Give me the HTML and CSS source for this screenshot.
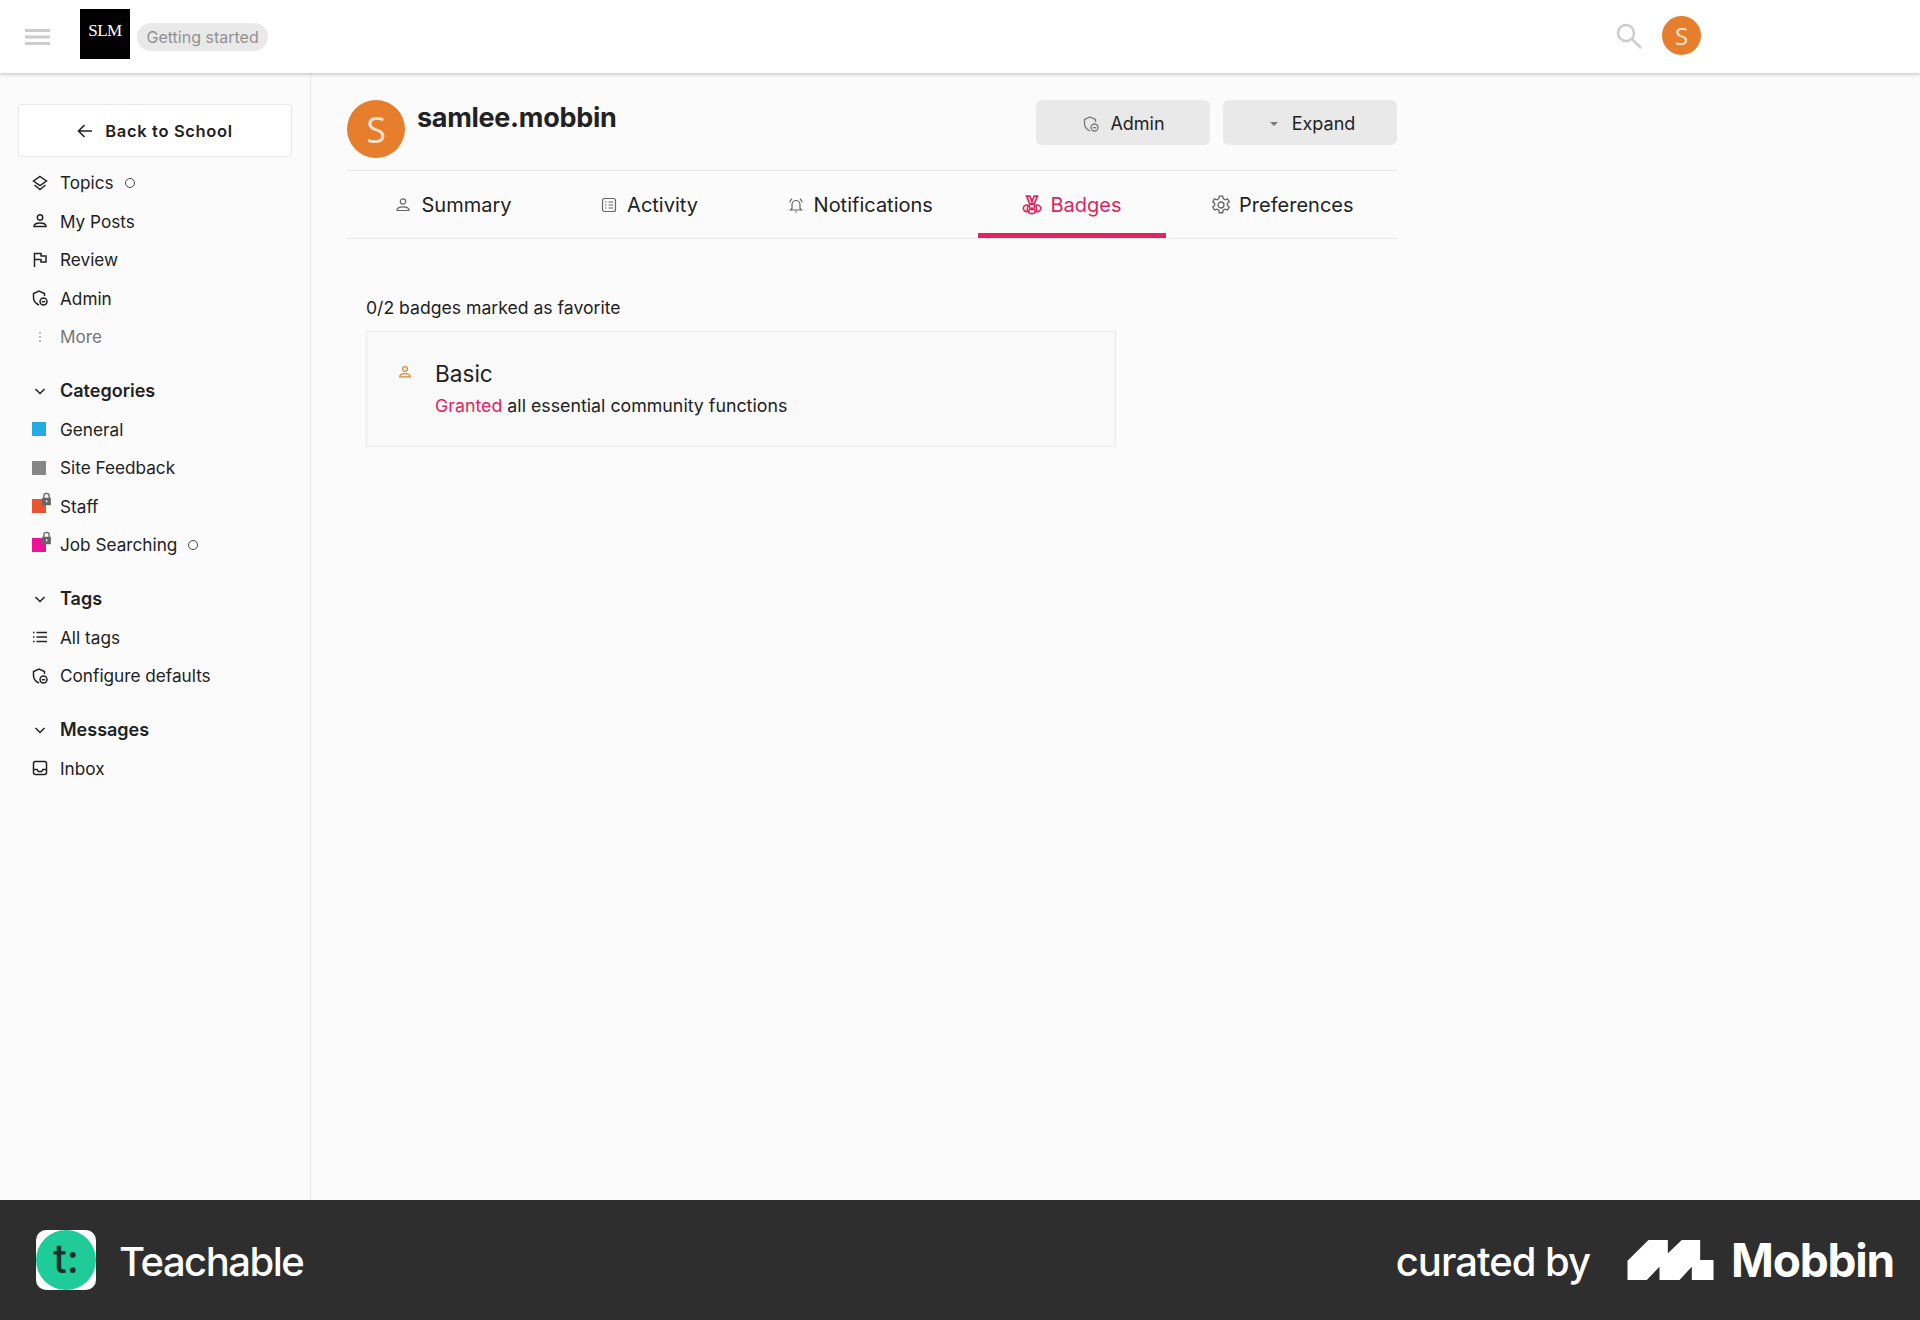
FILE: index.html
```html
<!DOCTYPE html>
<html lang="en">

<head>
    <meta charset="UTF-8">
    <title>samlee.mobbin - Badges</title>
    <link rel="stylesheet" href="styles.css">
</head>

<body>
    <svg class="sprite" xmlns="http://www.w3.org/2000/svg">
        <symbol id="i-layers" viewBox="0 0 16 16"><path d="M8 1.500 14.500 6 8 10.500 1.500 6Z"/><path d="M2.500 10 8 14.500 13.500 10"/></symbol>
        <symbol id="i-person" viewBox="0 0 16 16"><circle cx="8" cy="4.500" r="2.700"/><path d="M2 13.500c0-2.600 2.600-3.600 6-3.600s6 1 6 3.600Z"/></symbol>
        <symbol id="i-flag" viewBox="0 0 16 16"><path d="M2.500 15V1.500h6.500v2.500h5v6H9V7.500H2.500"/></symbol>
        <symbol id="i-shield" viewBox="0 0 16 16"><path d="M7 15C3.500 13.500 1.500 11 1.500 7.500V3.500L7 1l5.500 2.500V6"/><circle cx="11.500" cy="11.500" r="3.500"/><path d="M9.800 11.700h3.400"/></symbol>
        <symbol id="i-chevron" viewBox="0 0 16 16"><path d="M3.500 6 8 10.500 12.500 6"/></symbol>
        <symbol id="i-list" viewBox="0 0 16 16"><path d="M4.500 3.500H15M4.500 8H15M4.500 12.500H15M1 3.500h1.500M1 8h1.500M1 12.500h1.500"/></symbol>
        <symbol id="i-inbox" viewBox="0 0 16 16"><rect x="1.500" y="1.500" width="13" height="13" rx="2"/><path d="M1.500 9.500h3.500c.5 1.500 1.500 2.200 3 2.200s2.500-.7 3-2.200h3.500"/></symbol>
        <symbol id="i-activity" viewBox="0 0 16 16"><rect x="1.500" y="1.500" width="13" height="13" rx="2"/><path d="M4 5h1.500M7.500 5H12M4 8h1.500M7.500 8H12M4 11h1.500M7.500 11H12"/></symbol>
        <symbol id="i-bell" viewBox="0 0 16 16"><path d="M4 11.500V7.500a4 4 0 0 1 8 0v4l1.500 1.500h-11ZM7 15h2M1.800 5.500c.3-1.700 1-2.900 2.200-3.800M14.200 5.500c-.3-1.700-1-2.900-2.200-3.800"/></symbol>
        <symbol id="i-medal" viewBox="0 0 18 18"><path d="M4 1h3l2 5 2-5h3l-3 7H7Z"/><circle cx="9" cy="12.500" r="4.200"/><circle cx="4.200" cy="12" r="3"/><circle cx="13.800" cy="12" r="3"/><circle cx="9" cy="12.500" r=".8"/></symbol>
        <symbol id="i-gear" viewBox="0 0 18 18"><path d="M7.500 1h3l.5 2.300 1.700 1 2.200-.8 1.500 2.600-1.700 1.500v1.800l1.700 1.500-1.500 2.600-2.200-.8-1.700 1-.5 2.300h-3l-.5-2.300-1.700-1-2.200.8-1.500-2.600 1.700-1.500V7.600L1.600 6.100l1.500-2.600 2.200.8 1.700-1Z"/><circle cx="9" cy="9" r="2.700"/></symbol>
        <symbol id="i-lock" viewBox="0 0 12 16"><path class="lock-arc" d="M3 7V4.500a3 3 0 0 1 6 0V7"/><path class="lock-body" d="M1 6.500h10V15H1ZM6 9.500a1.200 1.200 0 1 0 0 2.400 1.200 1.200 0 0 0 0-2.400Z"/></symbol>
    </svg>

    <div class="page">
        <header class="topbar">
            <svg class="hamburger" viewBox="0 0 25 16"><path d="M0 1.500h25M0 8h25M0 14.500h25"/></svg>
            <div class="logo"><span class="logo-text">SLM</span></div>
            <span class="pill">Getting started</span>
            <div class="topbar-right">
                <svg class="search" viewBox="0 0 26 26"><circle cx="10" cy="10" r="8"/><path d="M16 16l9 9"/></svg>
                <span class="avatar avatar-small">S</span>
            </div>
        </header>

        <div class="layout">
            <nav class="sidebar">
                <a href="#" class="back-button">
                    <svg class="back-arrow" viewBox="0 0 16 16"><path d="M15 8H1.500M7.500 2 1.500 8l6 6"/></svg>
                    Back to School
                </a>

                <ul class="nav-list">
                    <li class="nav-row"><svg class="nav-icon"><use href="#i-layers"/></svg>Topics<span class="dot"></span></li>
                    <li class="nav-row"><svg class="nav-icon"><use href="#i-person"/></svg>My Posts</li>
                    <li class="nav-row"><svg class="nav-icon"><use href="#i-flag"/></svg>Review</li>
                    <li class="nav-row"><svg class="nav-icon"><use href="#i-shield"/></svg>Admin</li>
                    <li class="nav-row nav-more"><span class="more-dots"><i></i><i></i><i></i></span>More</li>
                </ul>

                <ul class="nav-list">
                    <li class="nav-row nav-title"><svg class="nav-icon"><use href="#i-chevron"/></svg>Categories</li>
                    <li class="nav-row"><span class="swatch swatch-blue"></span>General</li>
                    <li class="nav-row"><span class="swatch swatch-gray"></span>Site Feedback</li>
                    <li class="nav-row"><span class="swatch swatch-orange"><svg class="lock"><use href="#i-lock"/></svg></span>Staff</li>
                    <li class="nav-row"><span class="swatch swatch-pink"><svg class="lock"><use href="#i-lock"/></svg></span>Job Searching<span class="dot"></span></li>
                </ul>

                <ul class="nav-list">
                    <li class="nav-row nav-title"><svg class="nav-icon"><use href="#i-chevron"/></svg>Tags</li>
                    <li class="nav-row"><svg class="nav-icon"><use href="#i-list"/></svg>All tags</li>
                    <li class="nav-row"><svg class="nav-icon"><use href="#i-shield"/></svg>Configure defaults</li>
                </ul>

                <ul class="nav-list">
                    <li class="nav-row nav-title"><svg class="nav-icon"><use href="#i-chevron"/></svg>Messages</li>
                    <li class="nav-row"><svg class="nav-icon"><use href="#i-inbox"/></svg>Inbox</li>
                </ul>
            </nav>

            <main class="content">
                <div class="profile">
                    <span class="avatar avatar-large">S</span>
                    <h1 class="username">samlee.mobbin</h1>
                    <div class="profile-actions">
                        <a href="#" class="action-button"><svg class="action-icon"><use href="#i-shield"/></svg>Admin</a>
                        <a href="#" class="action-button"><span class="caret"></span>Expand</a>
                    </div>
                </div>

                <div class="tabs">
                    <a href="#" class="tab"><svg class="tab-icon"><use href="#i-person"/></svg>Summary</a>
                    <a href="#" class="tab"><svg class="tab-icon"><use href="#i-activity"/></svg>Activity</a>
                    <a href="#" class="tab"><svg class="tab-icon"><use href="#i-bell"/></svg>Notifications</a>
                    <a href="#" class="tab tab-active"><svg class="tab-icon tab-icon-big"><use href="#i-medal"/></svg>Badges</a>
                    <a href="#" class="tab"><svg class="tab-icon tab-icon-big"><use href="#i-gear"/></svg>Preferences</a>
                </div>

                <section class="badges">
                    <p class="badges-count">0/2 badges marked as favorite</p>
                    <div class="badge-card">
                        <svg class="badge-icon"><use href="#i-person"/></svg>
                        <div>
                            <h2 class="badge-name">Basic</h2>
                            <p class="badge-desc"><span class="granted">Granted</span> all essential community functions</p>
                        </div>
                    </div>
                </section>
            </main>
        </div>

        <footer class="credit">
            <div class="credit-left">
                <div class="teachable-icon"><span class="teachable-disc">t:</span></div>
                <span class="teachable-name">Teachable</span>
            </div>
            <div class="credit-right">
                <span class="curated">curated by</span>
                <svg class="mobbin-logo" viewBox="22 30 258 120"><path d="M22 92 85 30H143V70L185 30H240V90H280V150H215V110L178 150H118V110L80 150H22Z"/></svg>
                <span class="mobbin-name">Mobbin</span>
            </div>
        </footer>
    </div>
</body>

</html>
```

FILE: styles.css
```css
* {
    box-sizing: border-box;
}

body {
    margin: 0;
    font-family: Inter, "Liberation Sans", sans-serif;
    color: #222222;
    background-color: #fbfbfb;
}

a {
    color: inherit;
    text-decoration: none;
}

ul {
    list-style: none;
    margin: 0;
    padding: 0;
}

svg {
    fill: none;
    stroke: currentColor;
}

.sprite {
    display: none;
}

.page {
    display: flex;
    flex-direction: column;
    height: 1320px;
}

/* Top bar */
.topbar {
    display: flex;
    align-items: center;
    height: 73px;
    padding-left: 25px;
    background-color: #ffffff;
    box-shadow: 0 1px 4px rgba(0, 0, 0, 0.25);
    position: relative;
    z-index: 1;
}

.hamburger {
    width: 25px;
    height: 16px;
    stroke: #cccccc;
    stroke-width: 3;
}

.logo {
    display: flex;
    align-items: center;
    justify-content: center;
    width: 50px;
    height: 50px;
    margin-left: 30px;
    margin-top: -6px;
    background-color: #000000;
}

.logo-text {
    color: #ffffff;
    font-family: "Liberation Serif", serif;
    font-size: 17px;
    letter-spacing: -0.5px;
    margin-top: -5px;
}

.pill {
    margin-left: 7px;
    padding: 0 9.500px;
    height: 28px;
    line-height: 28px;
    border-radius: 14px;
    background-color: #e9e9e9;
    color: #919191;
    font-size: 16px;
}

.topbar-right {
    display: flex;
    align-items: center;
    margin-left: auto;
    margin-right: 219px;
    margin-top: -2px;
}

.search {
    width: 26px;
    height: 26px;
    stroke: #cccccc;
    stroke-width: 2.5;
    margin-right: 20px;
    margin-left: -1px;
}

.avatar {
    display: flex;
    align-items: center;
    justify-content: center;
    flex-shrink: 0;
    border-radius: 50%;
    background-color: #e67e2e;
    color: #fbe3cf;
    font-family: "Open Sans", sans-serif;
}

.avatar-small {
    width: 39px;
    height: 39px;
    font-size: 24px;
}

.avatar-large {
    width: 58px;
    height: 58px;
    font-size: 36px;
}

/* Sidebar */
.layout {
    display: flex;
    flex: 1;
    min-height: 0;
}

.sidebar {
    width: 311px;
    flex-shrink: 0;
    padding: 31px 18px 0;
    border-right: 1px solid #e9e9e9;
    font-size: 17.200px;
}

.back-button {
    display: flex;
    align-items: center;
    justify-content: center;
    gap: 12px;
    width: 274px;
    height: 53px;
    margin-bottom: 6.500px;
    background-color: #ffffff;
    border: 1px solid #e9e9e9;
    border-radius: 3px;
    font-size: 16.500px;
    font-weight: 600;
    letter-spacing: 0.65px;
}

.back-arrow {
    width: 16px;
    height: 16px;
    stroke-width: 1.600;
}

.nav-list {
    margin-bottom: 15.500px;
}

.nav-row {
    display: flex;
    align-items: center;
    height: 38.500px;
    padding-left: 14px;
}

.nav-icon {
    width: 16px;
    height: 16px;
    margin-right: 12px;
    stroke-width: 1.500;
    flex-shrink: 0;
}

.nav-title {
    font-size: 18px;
    font-weight: 600;
}

.nav-more {
    color: #777777;
}

.more-dots {
    display: flex;
    flex-direction: column;
    align-items: center;
    gap: 2px;
    width: 15px;
    margin-right: 13px;
}

.more-dots i {
    width: 2px;
    height: 2px;
    border-radius: 50%;
    background-color: #aaaaaa;
}

.dot {
    width: 10px;
    height: 10px;
    margin-left: 11px;
    border: 1px solid #444444;
    border-radius: 50%;
    background-color: #ffffff;
}

.swatch {
    position: relative;
    width: 14px;
    height: 14px;
    margin-right: 14px;
    flex-shrink: 0;
}

.swatch-blue {
    background-color: #25aae2;
}

.swatch-gray {
    background-color: #868686;
}

.swatch-orange {
    background-color: #e9552f;
}

.swatch-pink {
    background-color: #ee1199;
}

.lock {
    position: absolute;
    top: -7px;
    right: -6px;
    width: 11px;
    height: 14px;
}

.lock-arc {
    stroke: #666666;
    stroke-width: 1.500;
}

.lock-body {
    fill: #666666;
    fill-rule: evenodd;
    stroke: none;
}

/* Main */
.content {
    width: 1050px;
    margin-left: 36px;
    padding-top: 27px;
}

.profile {
    display: flex;
    align-items: flex-start;
    height: 71px;
    border-bottom: 1px solid #e9e9e9;
}

.username {
    margin: 3px 0 0 12px;
    font-size: 27px;
    line-height: 30px;
    font-weight: 700;
    letter-spacing: -0.300px;
}

.profile-actions {
    display: flex;
    gap: 13px;
    margin-left: auto;
}

.action-button {
    display: flex;
    align-items: center;
    justify-content: center;
    width: 174px;
    height: 45px;
    padding-top: 2px;
    border-radius: 6px;
    background-color: #e9e9e9;
    font-size: 18px;
}

.action-icon {
    width: 16px;
    height: 16px;
    margin: 0 11px 0 2px;
    color: #777777;
    stroke-width: 1.300;
}

.caret {
    width: 0;
    height: 0;
    margin: 0 14px 0 5px;
    border-left: 4.500px solid transparent;
    border-right: 4.500px solid transparent;
    border-top: 4.500px solid #777777;
}

.tabs {
    display: flex;
    justify-content: center;
    height: 68px;
    padding-left: 5px;
    border-bottom: 1px solid #e9e9e9;
}

.tab {
    display: flex;
    align-items: center;
    height: 67px;
    padding: 5px 44.800px 0;
    font-size: 20px;
    border-bottom: 5px solid transparent;
}

.tab-icon {
    width: 16px;
    height: 16px;
    margin-right: 10px;
    color: #666666;
    stroke-width: 1.200;
}

.tab-icon-big {
    width: 20px;
    height: 20px;
    margin-right: 8px;
}

.tab-active {
    color: #e0245e;
    border-bottom-color: #e0245e;
}

.tab-active .tab-icon {
    color: #e0245e;
    stroke-width: 1.500;
}

/* Badges */
.badges {
    padding: 57px 0 0 19px;
}

.badges-count {
    margin: 0 0 11px;
    font-size: 17.600px;
    line-height: 24px;
}

.badge-card {
    display: flex;
    align-items: flex-start;
    width: 750px;
    height: 116px;
    padding: 24px 0 0 32px;
    background-color: #f9f9f9;
    border: 1px solid #e9e9e9;
}

.badge-icon {
    width: 14px;
    height: 14px;
    margin: 9px 23px 0 -1px;
    color: #d58a35;
    stroke-width: 1.500;
}

.badge-name {
    margin: 1px 0 1px;
    font-size: 22.600px;
    line-height: 34px;
    font-weight: 400;
}

.badge-desc {
    margin: 0;
    font-size: 17.800px;
    line-height: 28px;
}

.granted {
    color: #e0245e;
}

/* Footer strip */
.credit {
    display: flex;
    align-items: center;
    justify-content: space-between;
    height: 120px;
    padding: 0 26px 0 36px;
    background-color: #2e2e2e;
    color: #ffffff;
}

.credit-left,
.credit-right {
    display: flex;
    align-items: center;
}

.teachable-icon {
    width: 60px;
    height: 60px;
    border-radius: 10px;
    background-color: #ffffff;
}

.teachable-disc {
    display: flex;
    align-items: center;
    justify-content: center;
    width: 60px;
    height: 60px;
    border-radius: 50%;
    background-color: #20cb9a;
    color: #16302c;
    font-size: 40px;
    font-weight: 500;
    padding-bottom: 4px;
}

.teachable-name {
    margin: 3px 0 0 23px;
    font-size: 40px;
    font-weight: 500;
    letter-spacing: -1.500px;
}

.curated {
    margin-top: 2px;
    font-size: 40px;
    font-weight: 500;
    letter-spacing: -1px;
}

.mobbin-logo {
    width: 87px;
    height: 40px;
    margin-left: 37px;
    fill: #ffffff;
    stroke: none;
}

.mobbin-name {
    margin-left: 17px;
    font-size: 46px;
    font-weight: 700;
    letter-spacing: -1.200px;
}
```
